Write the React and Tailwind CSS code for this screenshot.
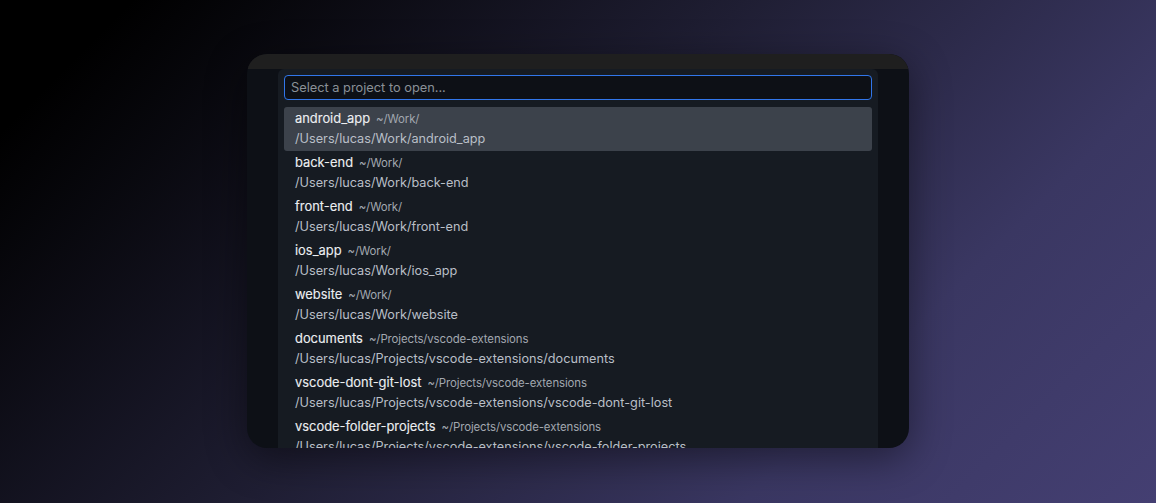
const PROJECTS = [
  { name: 'android_app', dir: '~/Work/', path: '/Users/lucas/Work/android_app' },
  { name: 'back-end', dir: '~/Work/', path: '/Users/lucas/Work/back-end' },
  { name: 'front-end', dir: '~/Work/', path: '/Users/lucas/Work/front-end' },
  { name: 'ios_app', dir: '~/Work/', path: '/Users/lucas/Work/ios_app' },
  { name: 'website', dir: '~/Work/', path: '/Users/lucas/Work/website' },
  { name: 'documents', dir: '~/Projects/vscode-extensions', path: '/Users/lucas/Projects/vscode-extensions/documents' },
  { name: 'vscode-dont-git-lost', dir: '~/Projects/vscode-extensions', path: '/Users/lucas/Projects/vscode-extensions/vscode-dont-git-lost' },
  { name: 'vscode-folder-projects', dir: '~/Projects/vscode-extensions', path: '/Users/lucas/Projects/vscode-extensions/vscode-folder-projects' },
];

function ProjectRow({ project, active }) {
  return (
    <div className={`flex h-[44px] shrink-0 flex-col rounded-[3px] px-[11px] pt-[2px] ${active ? 'bg-[#3c424b]' : ''}`}>
      <div className="flex h-[19px] items-baseline gap-[6px] leading-[19px]">
        <span className="text-[12.9px] font-normal text-[#eceef1] [-webkit-text-stroke:0.12px_#eceef1]">{project.name}</span>
        <span className="text-[11.4px] tracking-[-0.1px] text-[#a2a8b0]">{project.dir}</span>
      </div>
      <div className="whitespace-nowrap pt-[1px] text-[12.7px] leading-[20px] text-[#b9bfc7]">{project.path}</div>
    </div>
  );
}

export default function App() {
  return (
    <div
      className="flex h-[503px] w-[1156px] justify-center overflow-hidden bg-[linear-gradient(135deg,#000000_8%,#1f1e33_45%,#3a3762_75%,#443f72_100%)] pt-[54px]"
      style={{ fontFamily: 'Inter, "Noto Sans", sans-serif' }}
    >
      <div className="flex h-[394px] w-[662px] flex-col overflow-hidden rounded-[20px] bg-[#0d1016] shadow-[0_10px_40px_rgba(0,0,0,0.45)]">
        <div className="h-[15px] shrink-0 bg-[#1f1f1f]" />
        <div className="mx-auto flex min-h-0 w-[600px] flex-1 flex-col rounded-t-[6px] bg-[#161b22] px-[6px] pt-[6px]">
          <div className="flex h-[25px] shrink-0 items-center rounded-[4px] border border-[#3176ea] bg-[#0d1016] px-[6px] pt-[1px]">
            <span className="text-[12.8px] text-[#8a9097]">Select a project to open...</span>
          </div>
          <div className="mt-[7px] flex flex-col">
            {PROJECTS.map((p, i) => (
              <ProjectRow key={p.name} project={p} active={i === 0} />
            ))}
          </div>
        </div>
      </div>
    </div>
  );
}
